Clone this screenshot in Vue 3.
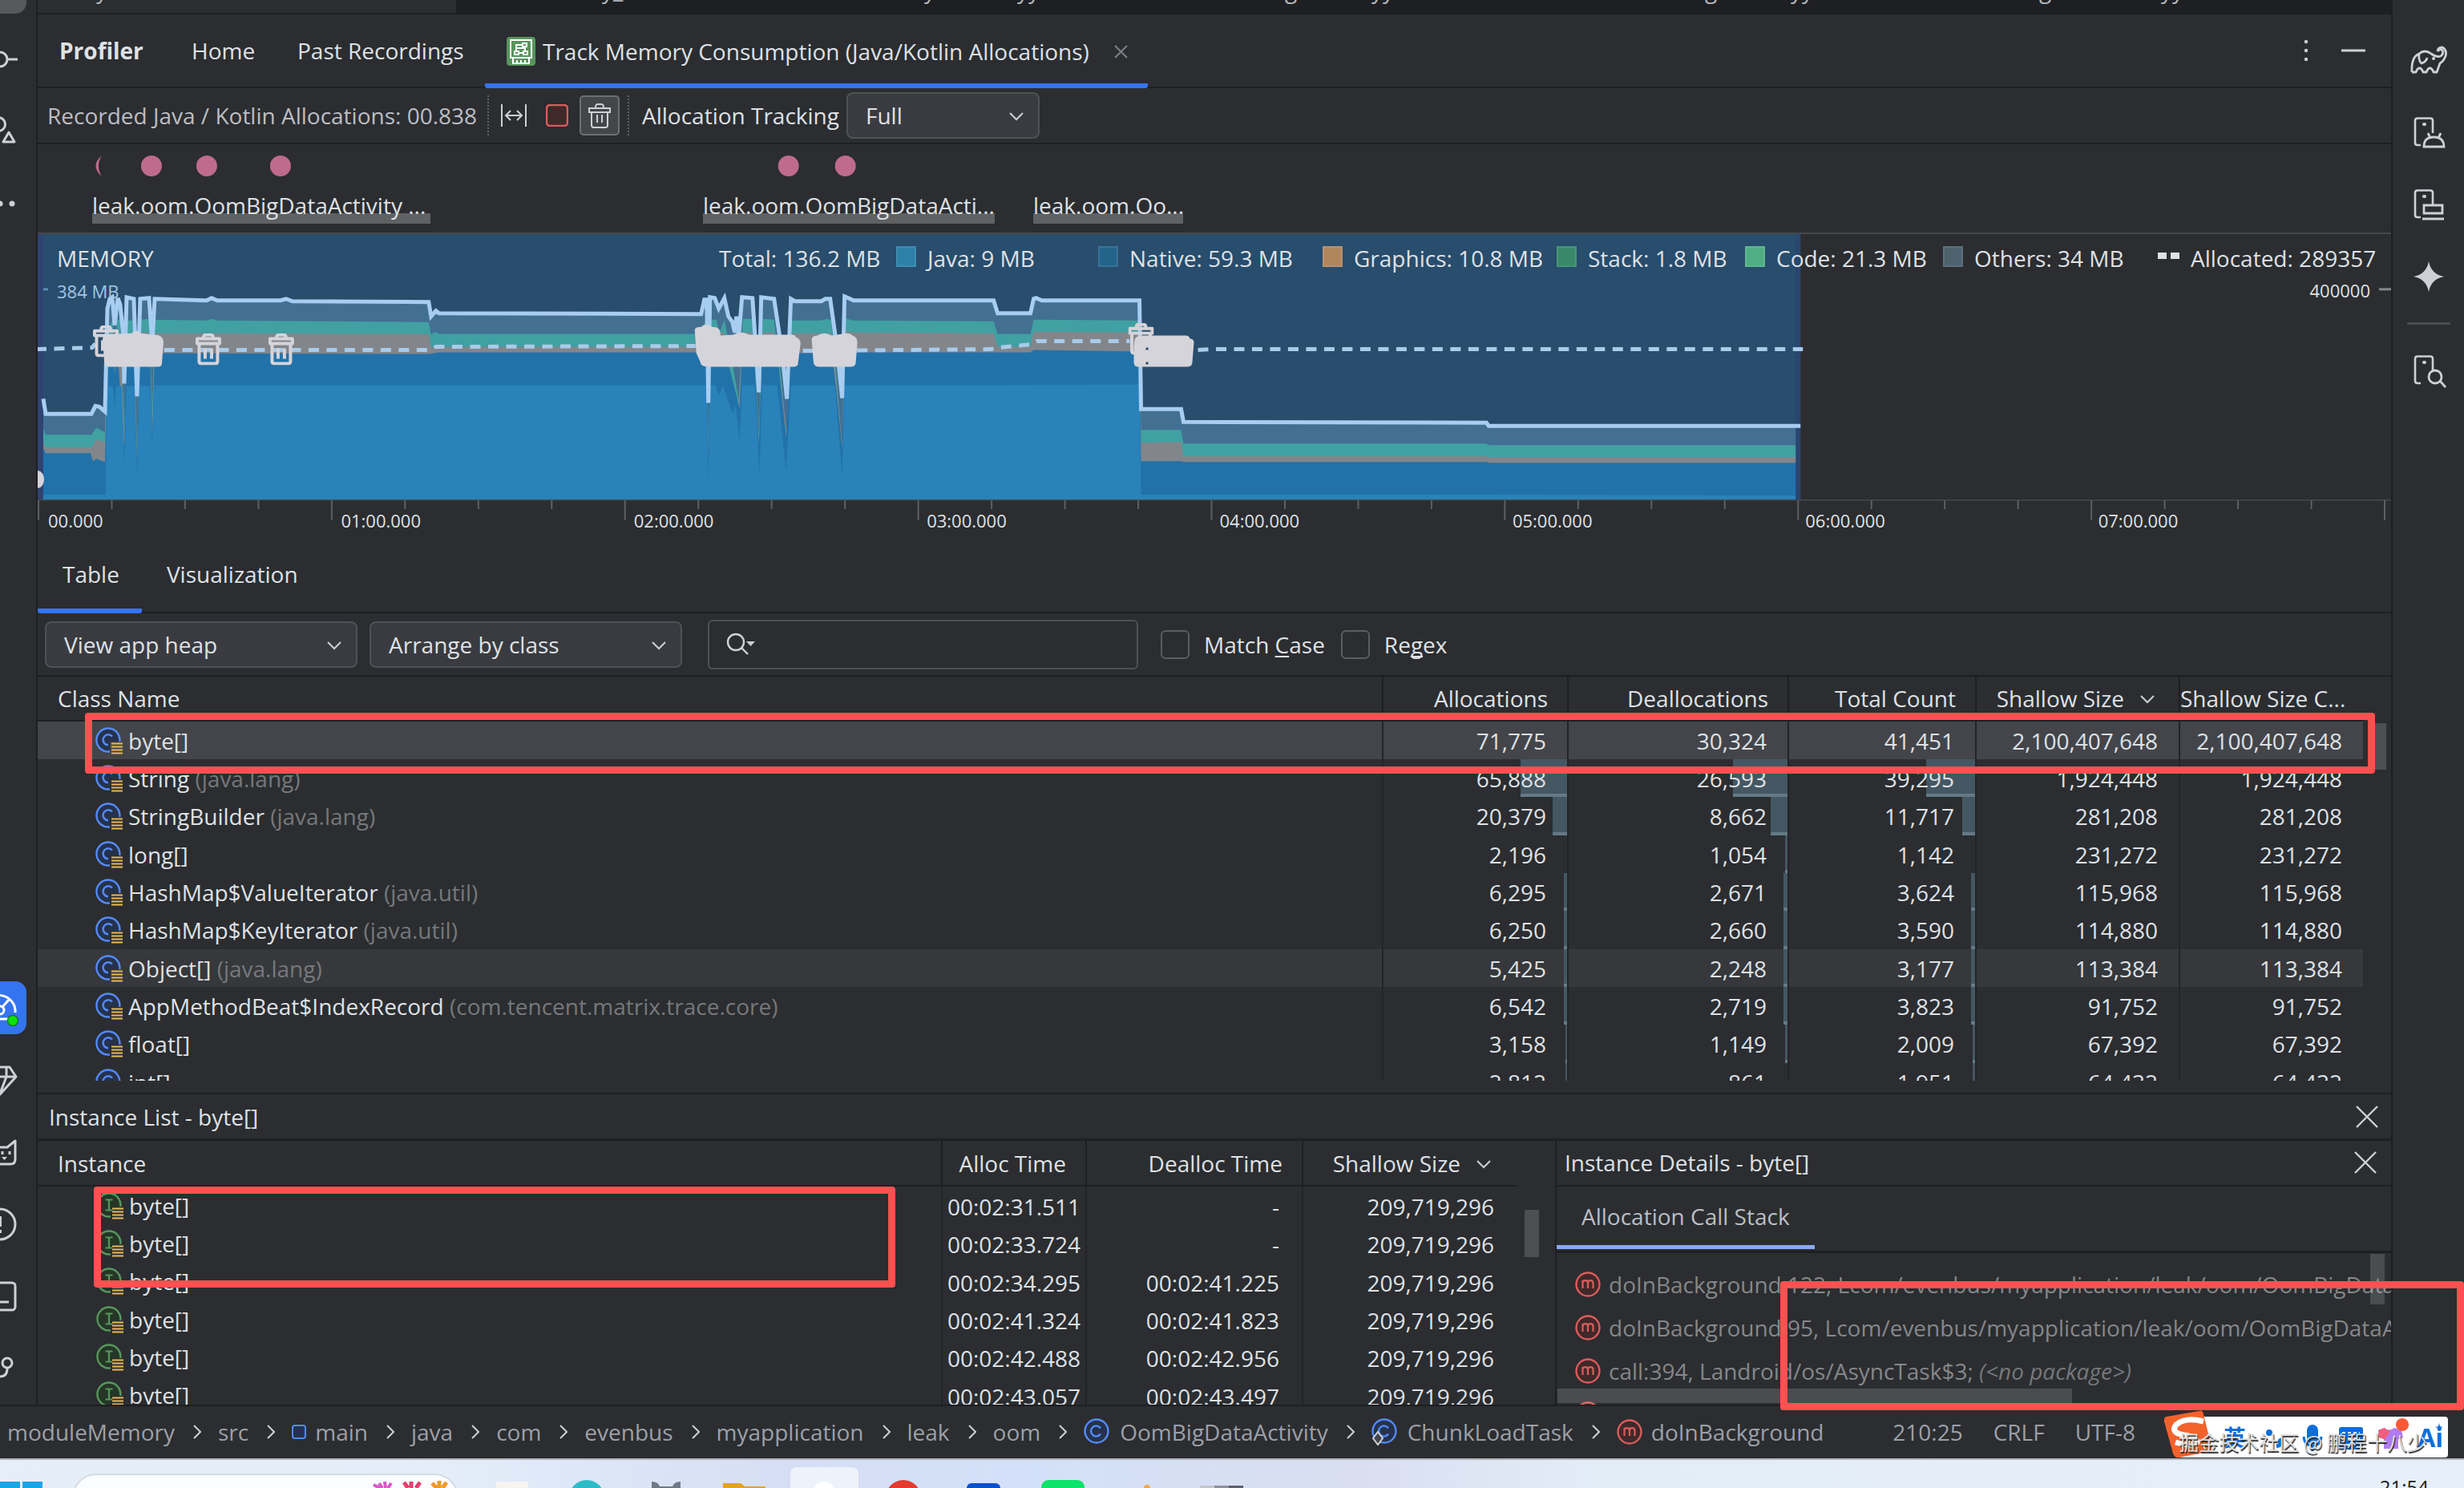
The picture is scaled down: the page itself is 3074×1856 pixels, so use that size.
<script setup>
import { ref } from 'vue'

const heap = ref('View app heap')
const arrange = ref('Arrange by class')
const tracking = ref('Full')
const query = ref('')
const matchCase = ref(false)
const regex = ref(false)
const taskSearch = ref('')

const stripMarks = [
  { t: 'y', w: 631 }, { t: 'y_', w: 402 }, { t: 'y', w: 116 }, { t: 'yy', w: 334 }, { t: 'g', w: 108 },
  { t: 'yy', w: 416 }, { t: 'g', w: 107 }, { t: 'yy', w: 310 }, { t: 'g', w: 152 }, { t: 'yy', w: 60 },
]

const touches = [189, 258, 350, 984, 1055]

const legend = [
  { name: 'Java: 9 MB', color: '#2d81a8' },
  { name: 'Native: 59.3 MB', color: '#24648a' },
  { name: 'Graphics: 10.8 MB', color: '#b0865f' },
  { name: 'Stack: 1.8 MB', color: '#37896a' },
  { name: 'Code: 21.3 MB', color: '#50ae84' },
  { name: 'Others: 34 MB', color: '#4e626d' },
]

const totalLine = '54,498 57,517 114,517 119,507 124,508 131,514 134,385 137,373 140,371 143,406 147,372 150,380 154,420 155,479 158,371 167,373 171,495 175,373 186,372 190,430 193,373 258,375 264,372 271,375 350,375 357,373 365,376 535,377 538,395 544,388 548,391 875,392 879,374 882,374 884,503 886,371 892,372 897,385 904,372 909,395 914,402 917,415 919,395 922,420 926,371 939,372 947,490 950,371 966,373 976,440 982,498 987,373 992,376 1025,376 1030,373 1036,373 1044,430 1051,497 1054,370 1061,373 1065,375 1240,375 1245,391 1286,391 1290,373 1293,372 1300,375 1422,375 1424,511 1474,511 1477,527 1855,528 1858,532 2247,532'
const close = ' 2243,624 54,624'
const others = totalLine.replace('2247,532', '2243,532') + close
const code = '54,535 57,543 114,543 120,534 131,540 134,412 141,398 143,480 146,399 150,399 155,530 158,400 167,400 171,560 175,399 186,398 190,510 193,399 258,400 264,398 271,400 535,402 538,418 543,414 548,417 875,417 880,400 884,540 888,399 894,399 898,415 904,399 910,430 922,500 927,398 939,398 947,540 952,398 966,399 976,480 982,560 987,400 1025,400 1032,398 1038,400 1044,470 1051,560 1054,397 1065,400 1240,401 1245,417 1286,417 1290,399 1422,400 1424,537 1474,537 1477,554 1855,554 1858,556 2243,556' + close
const graphics = '54,552 57,559 114,559 120,549 131,552 134,424 141,414 143,490 146,416 150,416 155,550 158,417 167,417 171,575 175,415 186,415 190,540 193,416 535,417 538,434 548,433 875,433 880,416 884,560 888,415 904,415 912,470 922,505 927,415 939,415 947,550 952,415 966,415 976,490 982,540 987,416 1038,416 1044,480 1051,555 1054,413 1065,415 1240,416 1245,433 1286,433 1290,414 1422,415 1424,553 1474,552 1477,570 1855,570 1858,571 2243,571' + close
const native = '54,560 57,566 113,566 116,576 120,573 131,577 134,448 141,442 143,468 147,442 155,560 157,442 167,442 171,578 174,442 187,442 190,545 193,441 535,442 548,440 875,440 882,441 884,570 886,441 905,441 914,474 923,510 926,441 941,441 947,556 951,441 970,441 981,545 987,441 1038,441 1044,490 1051,560 1054,440 1240,440 1286,440 1290,437 1422,439 1424,576 1474,576 1477,577 1855,577 1858,578 2243,578' + close
const java = '54,618 132,618 133,482 141,482 143,508 145,482 152,482 155,578 158,482 168,482 171,594 174,482 187,482 190,557 192,481 875,481 882,481 884,602 886,481 893,481 897,494 902,481 914,516 918,506 923,550 926,481 942,481 948,594 951,481 970,481 981,588 987,481 1042,481 1051,594 1054,481 1240,481 1422,480 1424,618 1855,618 2243,619' + close

const ticks = Array.from({ length: 33 }, (_, i) => 48 + i * 91.5)
const times = ['00.000', '01:00.000', '02:00.000', '03:00.000', '04:00.000', '05:00.000', '06:00.000', '07:00.000']

const classes = [
  { n: 'byte[]', p: '', v: ['71,775', '30,324', '41,451', '2,100,407,648', '2,100,407,648'], b: [0, 0, 0] },
  { n: 'String', p: '(java.lang)', v: ['65,888', '26,593', '39,295', '1,924,448', '1,924,448'], b: [58, 68, 61] },
  { n: 'StringBuilder', p: '(java.lang)', v: ['20,379', '8,662', '11,717', '281,208', '281,208'], b: [18, 21, 16] },
  { n: 'long[]', p: '', v: ['2,196', '1,054', '1,142', '231,272', '231,272'], b: [0, 3, 0] },
  { n: 'HashMap$ValueIterator', p: '(java.util)', v: ['6,295', '2,671', '3,624', '115,968', '115,968'], b: [4, 5, 5] },
  { n: 'HashMap$KeyIterator', p: '(java.util)', v: ['6,250', '2,660', '3,590', '114,880', '114,880'], b: [4, 5, 5] },
  { n: 'Object[]', p: '(java.lang)', v: ['5,425', '2,248', '3,177', '113,384', '113,384'], b: [4, 5, 5] },
  { n: 'AppMethodBeat$IndexRecord', p: '(com.tencent.matrix.trace.core)', v: ['6,542', '2,719', '3,823', '91,752', '91,752'], b: [4, 5, 5] },
  { n: 'float[]', p: '', v: ['3,158', '1,149', '2,009', '67,392', '67,392'], b: [2, 3, 3] },
  { n: 'int[]', p: '', v: ['2,812', '861', '1,951', '64,432', '64,432'], b: [2, 0, 3] },
]

const instances = [
  ['00:02:31.511', '-'], ['00:02:33.724', '-'], ['00:02:34.295', '00:02:41.225'],
  ['00:02:41.324', '00:02:41.823'], ['00:02:42.488', '00:02:42.956'], ['00:02:43.057', '00:02:43.497'],
]

const frames = [
  { t: 'doInBackground:122, Lcom/evenbus/myapplication/leak/oom/OomBigDataActivity', e: '' },
  { t: 'doInBackground:95, Lcom/evenbus/myapplication/leak/oom/OomBigDataActivity', e: '' },
  { t: 'call:394, Landroid/os/AsyncTask$3;', e: '(<no package>)' },
  { t: '', e: '' },
]

const crumbs = [
  { t: 'moduleMemory' }, { t: 'src' }, { t: 'main', i: 'dir' }, { t: 'java' }, { t: 'com' }, { t: 'evenbus' },
  { t: 'myapplication' }, { t: 'leak' }, { t: 'oom' }, { t: 'OomBigDataActivity', i: 'class' },
  { t: 'ChunkLoadTask', i: 'inner' }, { t: 'doInBackground', i: 'method' },
]
</script>

<template>
  <div class="app">
    <svg width="0" height="0" class="defs" aria-hidden="true">
      <symbol id="i-class" viewBox="0 0 34 34">
        <circle cx="16" cy="16" r="14.5" fill="#25324d" stroke="#548af7" stroke-width="2.4" />
        <path d="M21 12.5A6.5 6.500 0 1 0 21 19.500" fill="none" stroke="#548af7" stroke-width="2.4" />
      </symbol>
      <symbol id="i-class-src" viewBox="0 0 34 34">
        <path d="M30.300 18A14.500 14.500 0 1 0 18 30.400V18Z" fill="#25324d" />
        <path d="M30.300 18A14.500 14.500 0 1 0 18 30.400" fill="none" stroke="#548af7" stroke-width="2.4" />
        <path d="M21 11.500A6.500 6.500 0 1 0 16 22.300" fill="none" stroke="#548af7" stroke-width="2.4" />
        <path d="M20 20.500h14M20 24.500h14M20 28.500h14M20 32.500h14" stroke="#e5b95c" stroke-width="2" />
      </symbol>
      <symbol id="i-inst-src" viewBox="0 0 34 34">
        <path d="M30.300 18A14.500 14.500 0 1 0 18 30.400V18Z" fill="#253627" />
        <path d="M30.300 18A14.500 14.500 0 1 0 18 30.400" fill="none" stroke="#57965c" stroke-width="2.4" />
        <path d="M11.500 9.500h9M16 9.500v13M11.500 22.500h9" fill="none" stroke="#57965c" stroke-width="2.2" />
        <path d="M20 20.500h14M20 24.500h14M20 28.500h14M20 32.500h14" stroke="#e5b95c" stroke-width="2" />
      </symbol>
      <symbol id="i-method" viewBox="0 0 32 32">
        <circle cx="16" cy="16" r="14.500" fill="#402929" stroke="#db5c5c" stroke-width="2.4" />
        <path d="M9.500 21V11M9.500 14.500q0-3.300 3.200-3.300t3.300 3.300V21M16 14.500q0-3.300 3.200-3.300t3.300 3.300V21" fill="none" stroke="#db5c5c" stroke-width="2.200" />
      </symbol>
      <symbol id="i-chev" viewBox="0 0 18 12"><path d="M1 2l8 8 8-8" fill="none" stroke="#ced0d6" stroke-width="2" /></symbol>
      <symbol id="i-close" viewBox="0 0 28 28"><path d="M1 1l26 26M27 1L1 27" fill="none" stroke="#ced0d6" stroke-width="2.400" /></symbol>
      <symbol id="i-trash" viewBox="0 0 32 40">
        <path d="M10 6q0-4 3-4h6q3 0 3 4M2 7h28v6H2zM4.500 13v22q0 3 3 3h17q3 0 3-3V13M12 19v13M20 19v13" fill="none" stroke="#d5d4da" stroke-width="4" stroke-linejoin="round" />
      </symbol>
      <symbol id="i-phone" viewBox="-20 -20 40 40">
        <path d="M5 1V-14.500q0-3-3-3H-14q-3 0-3 3V13q0 3 3 3h4" fill="none" stroke="#ced0d6" stroke-width="2.600" />
        <rect x="-8" y="-12" width="5" height="4" rx="2" fill="#ced0d6" />
      </symbol>
    </svg>

    <div class="ide">
      <nav class="rail left">
        <div class="group top">
          <button class="tool grey" aria-label="Project"></button>
          <button class="tool" aria-label="Commit">
            <svg viewBox="-23 -23 46 46"><circle r="9" fill="none" stroke="#ced0d6" stroke-width="3" /><path d="M9 0H22" stroke="#ced0d6" stroke-width="3" /></svg>
          </button>
          <button class="tool" aria-label="Resources">
            <svg viewBox="-23 -23 46 46"><circle cx="-2" cy="-9" r="8.500" fill="none" stroke="#ced0d6" stroke-width="3" /><path d="M11 1l7 12H4z" fill="none" stroke="#ced0d6" stroke-width="3" stroke-linejoin="round" /></svg>
          </button>
          <button class="tool" aria-label="More">
            <svg viewBox="-23 -23 46 46"><circle cx="0" r="3.500" fill="#ced0d6" /><circle cx="15" r="3.500" fill="#ced0d6" /></svg>
          </button>
        </div>
        <div class="group">
          <button class="tool active" aria-label="Profiler">
            <svg viewBox="-23 -23 46 46"><path d="M-18 15A20 20 0 1 1 19 6M-4 14H10" fill="none" stroke="#fff" stroke-width="3" /><circle cx="0" cy="3" r="5" fill="none" stroke="#fff" stroke-width="3" /><path d="M3-1l8-9" stroke="#fff" stroke-width="3" /><circle cx="16" cy="16" r="6.500" fill="#0be40b" stroke="#1a7a2c" stroke-width="1.500" /></svg>
          </button>
          <button class="tool" aria-label="App quality">
            <svg viewBox="-23 -23 46 46"><path d="M-12-16H12L20-4 0 18-20-4ZM-8-4H20M8-16L8-4 0 17" fill="none" stroke="#ced0d6" stroke-width="3" stroke-linejoin="round" /></svg>
          </button>
          <button class="tool" aria-label="Logcat">
            <svg viewBox="-23 -23 46 46"><path d="M-19-14l8 8H9L19-14V9q0 6-6 6h-26q-6 0-6-6z" fill="none" stroke="#ced0d6" stroke-width="3" stroke-linejoin="round" /><path d="M3-1v4M12-1v4" stroke="#ced0d6" stroke-width="3" /><path d="M2 6h7L5.500 10z" fill="#ced0d6" /></svg>
          </button>
          <button class="tool" aria-label="Problems">
            <svg viewBox="-23 -23 46 46"><circle r="19" fill="none" stroke="#ced0d6" stroke-width="3" /><path d="M0-10V3M0 7v4" stroke="#ced0d6" stroke-width="4" /></svg>
          </button>
          <button class="tool" aria-label="Terminal">
            <svg viewBox="-23 -23 46 46"><rect x="-19" y="-17" width="38" height="34" rx="4" fill="none" stroke="#ced0d6" stroke-width="3" /><path d="M0 7h11" stroke="#ced0d6" stroke-width="3" /></svg>
          </button>
          <button class="tool" aria-label="Version control">
            <svg viewBox="-23 -23 46 46"><circle cx="9" cy="-7" r="6" fill="none" stroke="#ced0d6" stroke-width="3" /><path d="M9 0q0 10-9 10" fill="none" stroke="#ced0d6" stroke-width="3" /></svg>
          </button>
        </div>
      </nav>

      <main class="main">
        <div class="strip">
          <span v-for="(s, i) in stripMarks" :key="i" :style="{ width: s.w + 'px' }">{{ s.t }}</span>
        </div>

        <header class="head">
          <b class="title">Profiler</b>
          <a href="#" class="home">Home</a>
          <a href="#" class="past">Past Recordings</a>
          <div class="tab-open">
            <svg width="36" height="36" viewBox="0 0 36 36">
              <rect width="36" height="36" rx="4" fill="#57965c" />
              <path d="M5 4h26v22H5zM8 26v7h20v-7M13 33v-4M18 33v-4M23 33v-4" fill="none" stroke="#fff" stroke-width="2" />
              <path d="M20 8h5v4h-5zM10 18h5v4h-5zM21 18h5v4h-5zM15 20h6M12 18v-8h8M12 14h11v4" fill="none" stroke="#fff" stroke-width="2" />
            </svg>
            <span>Track Memory Consumption (Java/Kotlin Allocations)</span>
            <button class="plain" aria-label="Close tab"><svg width="17" height="17" viewBox="0 0 17 17"><path d="M1 1l15 15M16 1L1 16" stroke="#7d8086" stroke-width="2" /></svg></button>
          </div>
          <div class="head-actions">
            <button class="plain" aria-label="Options"><svg width="6" height="30" viewBox="0 0 6 30"><circle cx="3" cy="4" r="2.200" fill="#ced0d6" /><circle cx="3" cy="15" r="2.200" fill="#ced0d6" /><circle cx="3" cy="26" r="2.200" fill="#ced0d6" /></svg></button>
            <button class="plain" aria-label="Minimize"><svg width="30" height="30" viewBox="0 0 30 30"><path d="M0 15h30" stroke="#ced0d6" stroke-width="3" /></svg></button>
          </div>
        </header>

        <div class="toolbar">
          <span class="recorded">Recorded Java / Kotlin Allocations: 00.838</span>
          <i class="dots"></i>
          <button class="plain fit" aria-label="Zoom to fit"><svg width="32" height="28" viewBox="0 0 32 28"><path d="M1 0v28M31 0v28M6 14h20M12 8l-6 6 6 6M20 8l6 6-6 6" fill="none" stroke="#ced0d6" stroke-width="2" /></svg></button>
          <button class="plain stop" aria-label="Stop"><svg width="28" height="28" viewBox="0 0 28 28"><rect x="1" y="1" width="26" height="26" rx="4" fill="#402929" stroke="#db5c5c" stroke-width="2.400" /></svg></button>
          <button class="gc" aria-label="Force garbage collection"><svg width="28" height="32" viewBox="0 0 28 32"><path d="M9 6q0-4 3-4h4q3 0 3 4M1 7h26v5H1zM4 12v16q0 3 3 3h14q3 0 3-3V12M11 15v10M17 15v10" fill="none" stroke="#ced0d6" stroke-width="2" /></svg></button>
          <i class="dots"></i>
          <label for="tracking" class="track-label">Allocation Tracking</label>
          <span class="select small">
            <select id="tracking" v-model="tracking"><option>Full</option></select>
            <svg width="18" height="12"><use href="#i-chev" /></svg>
          </span>
        </div>

        <div class="events">
          <svg class="touches" height="110" viewBox="47 180 2937 110" preserveAspectRatio="none">
            <path d="M127 194q-15 13 0 26-8-13 0-26z" fill="#bf6b8e" />
            <circle v-for="x in touches" :key="x" :cx="x" cy="207" r="13" fill="#bf6b8e" />
          </svg>
          <div class="activities">
            <span class="a1">leak.oom.OomBigDataActivity ...</span>
            <span class="a2">leak.oom.OomBigDataActi...</span>
            <span class="a3">leak.oom.Oo...</span>
          </div>
        </div>

        <section class="chart">
          <svg class="plot" height="332" viewBox="47 292 2937 332" preserveAspectRatio="none">
            <rect x="47" y="292" width="2200" height="332" fill="#284d6d" />
            <polygon :points="others" fill="#436f93" />
            <polygon :points="code" fill="#40a0a2" />
            <polygon :points="graphics" fill="#82868b" />
            <polygon :points="native" fill="#2272aa" />
            <polygon :points="java" fill="#2982ba" />
            <rect x="47" y="292" width="7" height="332" fill="#2f4372" />
            <rect x="2241" y="292" width="6" height="332" fill="#294571" />
            <path d="M54 361h6" stroke="#5d8db3" stroke-width="3" />
            <path d="M2969 361h15" stroke="#85878a" stroke-width="3" />
            <polyline :points="totalLine" fill="none" stroke="#a7cdf1" stroke-width="5" />
            <g fill="none" stroke="#a9cbea" stroke-width="5" stroke-dasharray="13 9.500">
              <path d="M45 436L115 434 119 429" />
              <path d="M205 437H535L544 433 868 432" />
              <path d="M1002 438L1236 436 1245 434 1286 430 1294 426H1410" />
              <path d="M1495 437L1510 436H2250" />
            </g>
            <g fill="#d5d4da">
              <path d="M128 424q0-6 8-6l8-1 20-1q6-6 12 0l16 2q12 0 12 10l-2 26q0 4-5 4h-62q-4 0-5-8z" />
              <path d="M867 412q0-4 8-4 6-6 14 0 10 0 10 8v3l16-1q10-6 20 0h50q8-1 8 3 6 2 6 8l-3 24q0 5-6 5h-106q-10 0-10-6l-5-11z" />
              <path d="M1013 424q0-5 7-5 8-6 18 0l18-3q6 0 8 3 6 2 6 9l-2 24q0 6-6 6h-40q-7 0-7-8z" />
              <path d="M1416 424q2-5 10-5l54 0q4 0 5 4 5 0 5 5l-2 24q0 6-6 6h-62q-5 0-5-6v-20z" />
              <path d="M47 588a8 11 0 0 1 0 22z" />
            </g>
            <path d="M1430 434h3v3h-3zM1430 452h3v3h-3z" fill="#2b4b69" />
            <use href="#i-trash" x="116" y="406" width="32" height="40" />
            <use href="#i-trash" x="244" y="416" width="32" height="40" />
            <use href="#i-trash" x="335" y="416" width="32" height="40" />
            <use href="#i-trash" x="1408" y="403" width="32" height="40" />
          </svg>
          <span class="mem">MEMORY</span>
          <span class="ymax">384 MB</span>
          <span class="ymax2">400000</span>
          <div class="legend">
            <span class="total">Total: 136.2 MB</span>
            <span v-for="l in legend" :key="l.name"><i class="sw" :style="{ background: l.color }"></i>{{ l.name }}</span>
            <span><i class="dash"></i>Allocated: 289357</span>
          </div>
        </section>

        <div class="axis">
          <svg class="ticks" height="60" viewBox="47 0 2937 60" preserveAspectRatio="none">
            <path d="M47 0H2984" stroke="#45494c" stroke-width="3" />
            <path v-for="(x, i) in ticks" :key="i" :d="`M${x} 1v${i % 4 ? 11 : 25}`" stroke="#5d6063" stroke-width="2" />
          </svg>
          <div class="times"><span v-for="t in times" :key="t">{{ t }}</span></div>
        </div>

        <nav class="tabs">
          <button class="on">Table</button>
          <button>Visualization</button>
        </nav>

        <div class="filters">
          <span class="select">
            <select v-model="heap" aria-label="Heap"><option>View app heap</option></select>
            <svg width="18" height="12"><use href="#i-chev" /></svg>
          </span>
          <span class="select">
            <select v-model="arrange" aria-label="Arrangement"><option>Arrange by class</option></select>
            <svg width="18" height="12"><use href="#i-chev" /></svg>
          </span>
          <span class="search">
            <svg width="38" height="30" viewBox="0 0 38 30"><circle cx="12" cy="12" r="10" fill="none" stroke="#ced0d6" stroke-width="2.400" /><path d="M19 19l8 8" stroke="#ced0d6" stroke-width="2.400" /><path d="M25 11h11l-5.500 6z" fill="#ced0d6" /></svg>
            <input v-model="query" type="text" aria-label="Filter" />
          </span>
          <label class="check"><input v-model="matchCase" type="checkbox" /><span>Match <u>C</u>ase</span></label>
          <label class="check"><input v-model="regex" type="checkbox" /><span>Re<u>g</u>ex</span></label>
        </div>

        <section class="classes">
          <div class="clip">
            <table>
              <colgroup><col /><col class="c1" /><col class="c2" /><col class="c3" /><col class="c4" /><col class="c5" /></colgroup>
              <thead>
                <tr>
                  <th class="first">Class Name</th><th>Allocations</th><th>Deallocations</th><th>Total Count</th>
                  <th class="sorted">Shallow Size<svg width="18" height="12"><use href="#i-chev" /></svg></th>
                  <th class="last">Shallow Size C...</th>
                </tr>
              </thead>
              <tbody>
                <tr v-for="(c, r) in classes" :key="c.n" :class="{ sel: r === 0, hov: r === 6 }">
                  <td class="first"><span class="cell"><svg width="34" height="34"><use href="#i-class-src" /></svg><span>{{ c.n }} <em v-if="c.p">{{ c.p }}</em></span></span></td>
                  <td v-for="(v, i) in c.v" :key="i"><i v-if="c.b[i]" class="bar" :style="{ width: c.b[i] + 'px' }"></i><span class="num">{{ v }}</span></td>
                </tr>
              </tbody>
            </table>
          </div>
          <i class="scroll"></i>
        </section>

        <section class="bottom">
          <div class="bar-title"><span>Instance List - byte[]</span><button class="plain" aria-label="Close instance list"><svg width="28" height="28"><use href="#i-close" /></svg></button></div>
          <div class="split">
            <div class="list">
              <table>
                <colgroup><col /><col class="d1" /><col class="d2" /><col class="d3" /></colgroup>
                <thead>
                  <tr><th class="first">Instance</th><th>Alloc Time</th><th>Dealloc Time</th><th class="sorted">Shallow Size<svg width="18" height="12"><use href="#i-chev" /></svg></th></tr>
                </thead>
                <tbody>
                  <tr v-for="i in instances" :key="i[0]">
                    <td class="first"><span class="cell"><svg width="34" height="34"><use href="#i-inst-src" /></svg><span>byte[]</span></span></td>
                    <td class="at">{{ i[0] }}</td><td>{{ i[1] }}</td><td>209,719,296</td>
                  </tr>
                </tbody>
              </table>
              <i class="scroll"></i>
            </div>
            <div class="details">
              <div class="det-title"><span>Instance Details - byte[]</span><button class="plain" aria-label="Close instance details"><svg width="28" height="28"><use href="#i-close" /></svg></button></div>
              <div class="det-tabs"><button>Allocation Call Stack</button></div>
              <div class="stack">
                <div v-for="(f, i) in frames" :key="i" class="frame"><svg width="32" height="32"><use href="#i-method" /></svg><span>{{ f.t }} <em v-if="f.e">{{ f.e }}</em></span></div>
                <i class="vs"></i><i class="hs"></i>
              </div>
            </div>
          </div>
        </section>
      </main>

      <nav class="rail right">
        <button class="tool" aria-label="Gradle">
          <svg viewBox="0 -6 46 46"><path d="M2 32Q1 13 11 9 18 3 26 9 33 14 38 12 42 9 40 5 37 2 34 6M34 6Q34 1 40 1 46 4 44 12 41 19 37 21L33 32H29Q27 27 24.500 27T20 32H16Q14 27 11.500 27T7 32H2M11 9Q10 18 14 21 20 19 21 14" fill="none" stroke="#ced0d6" stroke-width="2.800" stroke-linejoin="round" /><circle cx="29" cy="15" r="2" fill="#ced0d6" /></svg>
        </button>
        <button class="tool" aria-label="Device manager">
          <svg viewBox="-23 -23 46 46"><use href="#i-phone" x="-20" y="-20" width="40" height="40" /><path d="M-6 18Q-6 6 6.500 6T19 18ZM-1 1l3 6M15 1l-3 6" fill="none" stroke="#ced0d6" stroke-width="2.800" /></svg>
        </button>
        <button class="tool" aria-label="Running devices">
          <svg viewBox="-23 -23 46 46"><use href="#i-phone" x="-20" y="-20" width="40" height="40" /><path d="M-6 1H17V11H-6ZM-8 18H19" fill="none" stroke="#ced0d6" stroke-width="2.800" /></svg>
        </button>
        <button class="tool" aria-label="Assistant">
          <svg viewBox="-23 -23 46 46"><path d="M0-19Q3-3 19 0 3 3 0 19-3 3-19 0-3-3 0-19Z" fill="#ced0d6" /></svg>
        </button>
        <hr />
        <button class="tool" aria-label="Device explorer">
          <svg viewBox="-23 -23 46 46"><use href="#i-phone" x="-20" y="-20" width="40" height="40" /><circle cx="8" cy="8" r="8" fill="none" stroke="#ced0d6" stroke-width="2.800" /><path d="M14 13l7 8" stroke="#ced0d6" stroke-width="2.800" /></svg>
        </button>
      </nav>

      <i class="mark m1"></i><i class="mark m2"></i><i class="mark m3"></i>
    </div>

    <footer class="status">
      <div class="crumbs">
        <template v-for="(c, i) in crumbs" :key="c.t">
          <svg v-if="i" class="sep" width="10" height="18" viewBox="0 0 10 18"><path d="M1 1l8 8-8 8" fill="none" stroke="#ced0d6" stroke-width="2" /></svg>
          <a href="#">
            <svg v-if="c.i === 'dir'" width="18" height="18" viewBox="0 0 18 18"><rect x="1" y="1" width="16" height="16" rx="3" fill="#25324d" stroke="#548af7" stroke-width="2" /></svg>
            <svg v-if="c.i === 'class'" class="big" width="34" height="34"><use href="#i-class" /></svg>
            <svg v-if="c.i === 'inner'" class="big" width="34" height="34"><use href="#i-class" /><path d="M8 17l6 8-6 8-6-8z" fill="#43454a" stroke="#ced0d6" stroke-width="2" /></svg>
            <svg v-if="c.i === 'method'" class="big" width="32" height="32"><use href="#i-method" /></svg>{{ c.t }}</a>
        </template>
      </div>
      <div class="info"><span>210:25</span><span>CRLF</span><span>UTF-8</span></div>
      <div class="ime">
        <svg class="ime-s" width="60" height="60" viewBox="0 0 60 60"><path d="M4 8Q0 9 1 14L12 54Q14 60 20 59L58 51Q62 50 60 45L50 5Q49-1 44 1Z" fill="#f4622b" /><path d="M50 14Q28 8 16 18 8 28 26 31 42 33 42 40 36 46 15 40" fill="none" stroke="#fff" stroke-width="7" /></svg>
        <span class="ying">英</span>
        <svg width="250" height="51" viewBox="2804 1767 250 51">
          <circle cx="2831" cy="1787" r="4" fill="#0b6edb" /><path d="M2843 1795q6 7-3 9" stroke="#0b6edb" stroke-width="5" fill="none" />
          <rect x="2878" y="1777" width="14" height="24" rx="7" fill="#0b6edb" /><path d="M2874 1792q1 11 11 11t11-11M2885 1804v6" stroke="#0b6edb" stroke-width="3" fill="none" />
          <rect x="2918" y="1780" width="30" height="28" rx="3" fill="#0b6edb" /><path d="M2922 1787h22M2922 1794h22M2927 1802h13" stroke="#fff" stroke-width="2" stroke-dasharray="4 3" />
          <path d="M2967 1784l8-3q5 5 12 0l9 3 2 9-6 2v12h-18v-12l-6-2z" fill="#b07cf2" /><path d="M2967 1784l8-3q3 4 8 3l-9 13v-2l-6-2z" fill="#ef5f7c" /><circle cx="2997" cy="1777" r="8" fill="#fa5a36" />
          <path d="M3043 1775l1 4 4 1-4 1-1 4-1-4-4-1 4-1z" fill="#0b6edb" />
        </svg>
        <b class="ai">Ai</b>
      </div>
      <span class="watermark">掘金技术社区 @ 鹏程十八少</span>
    </footer>

    <footer class="taskbar">
      <svg width="53" height="35" viewBox="0 0 53 35"><path d="M0 27h25v8H0zM28 27h25v8H28z" fill="#1ba5e8" /></svg>
      <span class="pill">
        <input v-model="taskSearch" type="text" aria-label="Search" />
        <svg width="100" height="17" viewBox="465 1839 100 17"><path d="M467 1852l8 4M474 1850l4 6M481 1848l1 8M489 1850l-4 6" stroke="#d957c8" stroke-width="4" /><path d="M505 1849l5 7M514 1848v8M525 1849l-5 7" stroke="#e5406e" stroke-width="5" /><path d="M540 1850l6 6M549 1847v9M558 1849l-5 7" stroke="#f0982a" stroke-width="5" /></svg>
      </span>
      <svg width="960" height="35" viewBox="600 1821 960 35">
        <rect x="619" y="1848" width="40" height="8" fill="#f6f4f0" />
        <circle cx="732" cy="1868" r="22" fill="#2cbcc8" />
        <path d="M813 1848q8 0 10 6h16q2-6 10-6v8h-36z" fill="#6f7a86" />
        <path d="M902 1850h22l5 4h26v4h-53z" fill="#e3a31a" />
        <rect x="986" y="1830" width="85" height="40" rx="8" fill="#eef2fb" />
        <circle cx="1028" cy="1862" r="14" fill="#fff" />
        <circle cx="1127" cy="1868" r="22" fill="#e23b30" />
        <rect x="1206" y="1850" width="42" height="20" rx="6" fill="#0b4fd0" />
        <rect x="1299" y="1846" width="54" height="30" rx="9" fill="#0be36b" />
        <circle cx="1431" cy="1856" r="4" fill="#f5a54a" />
        <path d="M1497 1853h18v3h-18z" fill="#c2c6cc" /><path d="M1515 1853h18v3h-18z" fill="#8c9099" /><path d="M1533 1853h18v3h-18z" fill="#5c6068" />
      </svg>
      <span class="clock">21:54</span>
    </footer>
  </div>
</template>

<style>
body { background: #2b2d30; overflow: hidden; }
</style>

<style scoped>
* { box-sizing: border-box; }
.app { height: 100vh; display: flex; flex-direction: column; overflow: hidden; background: #2b2d30; color: #dfe1e5; font: 28px/40px "Open Sans", "Noto Sans", "Noto Sans CJK SC", sans-serif; }
.defs { position: absolute; }
svg { display: block; flex: none; }
button, input, select { font: inherit; color: inherit; background: none; border: 0; padding: 0; margin: 0; outline: 0; border-radius: 0; }
a { color: inherit; text-decoration: none; }
span, button, th, td { white-space: nowrap; }
.plain { display: flex; align-items: center; }

.ide { flex: 1; min-height: 0; display: flex; position: relative; border-bottom: 2px solid #1e1f22; }
.rail { flex: none; display: flex; flex-direction: column; }
.rail.left { width: 47px; justify-content: space-between; overflow: hidden; border-right: 2px solid #1e1f22; padding-bottom: 12px; }
.rail.left .group { display: flex; flex-direction: column; gap: 24px; width: 66px; margin-left: -33px; }
.rail.left .top { margin-top: -49px; }
.rail.right { width: 91px; align-items: center; gap: 24px; padding-top: 42px; border-left: 2px solid #1e1f22; }
.rail.right hr { width: 54px; height: 3px; margin: 0; border: 0; background: #4a4c50; }
.tool { width: 66px; height: 66px; border-radius: 14px; display: flex; align-items: center; justify-content: center; }
.tool svg { width: 46px; height: 46px; }
.tool.grey { background: #57595b; }
.tool.active { background: #3574f0; }

.main { flex: 1; min-width: 0; display: flex; flex-direction: column; }
.strip { flex: none; height: 18px; display: flex; overflow: hidden; padding-left: 73px; border-bottom: 2px solid #1e1f22; background: linear-gradient(90deg, #2b2d30 522px, #1e1f22 522px); color: #b4b7bc; line-height: 0; }
.strip span { flex: none; height: 0; margin-top: -13px; }

.head { flex: none; height: 92px; display: flex; align-items: center; padding-left: 27px; border-bottom: 2px solid #1e1f22; }
.title { width: 165px; }
.home { width: 132px; }
.past { width: 234px; }
.tab-open { height: 92px; width: 827px; margin-bottom: -2px; padding: 6px 25px 0 27px; display: flex; align-items: center; gap: 9px; border-bottom: 6px solid #3574f0; border-radius: 3px; }
.tab-open .plain { margin-left: auto; }
.head-actions { margin-left: auto; display: flex; gap: 41px; padding-right: 32px; }

.toolbar { flex: none; height: 70px; display: flex; align-items: center; padding-left: 12px; border-bottom: 2px solid #1e1f22; }
.recorded { width: 549px; color: #bcbec4; }
.dots { height: 50px; border-left: 2px dotted #606367; }
.fit { margin-left: 15px; }
.stop { margin-left: 24px; }
.gc { width: 50px; height: 50px; margin: 0 10px 0 14px; display: flex; align-items: center; justify-content: center; background: #43474a; border: 2px solid #6c7073; border-radius: 5px; }
.track-label { width: 271px; padding-left: 16px; white-space: nowrap; }
.select { position: relative; display: block; width: 390px; }
.select.small { width: 241px; }
.select select { appearance: none; width: 100%; height: 58px; padding: 0 22px; background: #393b40; border: 2px solid #4e5157; border-radius: 8px; }
.select svg { position: absolute; right: 20px; top: 24px; pointer-events: none; }

.events { flex: none; height: 110px; position: relative; }
.touches { width: 100%; position: absolute; left: 0; top: 0; }
.activities { display: flex; padding: 56px 0 0 68px; position: relative; }
.activities span { height: 43px; background: linear-gradient(#5f6163, #5f6163) 0 30px / 100% 13px no-repeat; overflow: hidden; }
.a1 { width: 422px; margin-right: 340px; }
.a2 { width: 364px; margin-right: 48px; }
.a3 { width: 187px; }

.chart { flex: none; height: 333px; position: relative; border-top: 2px solid #46484a; }
.plot { width: 100%; height: 331px; }
.mem { position: absolute; left: 24px; top: 10px; }
.ymax { position: absolute; left: 24px; top: 51px; font-size: 22px; color: #a4c6e4; }
.ymax2 { position: absolute; right: 26px; top: 50px; font-size: 22px; }
.legend { position: absolute; right: 0; top: 10px; display: grid; grid-template-columns: 221px 252px 280px 292px 235px 247px 268px 291px; }
.legend span { display: flex; align-items: center; gap: 14px; }
.sw { width: 25px; height: 26px; margin-top: -4px; border: 2px solid #ffffff18; flex: none; }
.dash { width: 27px; height: 8px; flex: none; margin-top: -6px; background: linear-gradient(90deg, #dfe1e5 11px, transparent 11px 16px, #dfe1e5 16px); }

.axis { flex: none; height: 61px; position: relative; font-size: 22px; }
.ticks { width: 100%; position: absolute; left: 0; top: 0; }
.times { display: flex; position: relative; padding: 6px 0 0 13px; }
.times span { width: 366px; flex: 0 1 366px; }

.tabs { flex: none; height: 81px; display: flex; border-bottom: 2px solid #1e1f22; }
.tabs button { height: 81px; padding: 0 28px 11px 31px; border-bottom: 6px solid transparent; border-radius: 3px; }
.tabs .on { border-color: #3574f0; }

.filters { flex: none; height: 79px; display: flex; align-items: center; padding-left: 9px; border-bottom: 2px solid #1e1f22; }
.filters .select { margin-right: 15px; }
.search { width: 537px; height: 62px; margin: 0 28px 0 17px; display: flex; align-items: center; gap: 10px; padding-left: 21px; border: 2px solid #4e5157; border-radius: 6px; }
.search input { flex: 1; min-width: 0; height: 56px; }
.check { display: flex; align-items: center; gap: 18px; margin-right: 20px; white-space: nowrap; }
.check input { appearance: none; width: 36px; height: 36px; border: 2px solid #5a5d63; border-radius: 6px; }
.check u { text-underline-offset: 3px; text-decoration-thickness: 2px; text-decoration-skip-ink: none; }

table { width: 100%; table-layout: fixed; border-collapse: separate; border-spacing: 0; }
th { font-weight: 400; text-align: right; height: 56px; padding: 0 24px 0 0; border-bottom: 2px solid #1e1f22; border-left: 2px solid #1e1f22; }
td { text-align: right; height: 47px; padding: 0 26px 0 0; line-height: 40px; border-left: 2px solid #222427; position: relative; }
tr:nth-child(3n) td { height: 48px; }
th.first { text-align: left; padding-left: 25px; border-left: 0; }
td.first { text-align: left; border-left: 0; }
th.sorted svg { display: inline-block; margin-left: 20px; vertical-align: 4px; }
.cell { display: flex; align-items: center; gap: 7px; }
em { font-style: normal; color: #76787b; }
.sel td { background: #43454a; }
.hov td { background: #36383b; }
.bar { position: absolute; right: 0; top: 0; bottom: 0; background: #445763; border-bottom: 4px solid #647a87; }
.num { position: relative; }
.scroll { position: absolute; background: #4d4f51; }

.classes { flex: 1; min-height: 0; position: relative; padding: 0 35px 15px 0; border-bottom: 2px solid #1e1f22; }
.clip { height: 100%; overflow: hidden; }
.classes td.first { padding-left: 72px; }
.classes th.last { padding-right: 0; text-align: left; }
.classes th.sorted { padding-right: 30px; }
.classes .scroll { right: 6px; top: 58px; width: 17px; height: 58px; }
.c1 { width: 231px; } .c2 { width: 275px; } .c3 { width: 234px; } .c4 { width: 254px; } .c5 { width: 230px; }

.bottom { flex: none; height: 387px; display: flex; flex-direction: column; }
.bar-title { flex: none; height: 58px; display: flex; align-items: center; justify-content: space-between; padding: 0 16px 0 14px; border-bottom: 3px solid #1e1f22; }
.split { flex: 1; min-height: 0; display: grid; grid-template-columns: minmax(0, 1893fr) minmax(0, 1043fr); grid-template-rows: minmax(0, 1fr); }
.list { overflow: hidden; position: relative; padding-right: 48px; }
.list th { height: 57px; }
.list td { padding: 3px 28px 0 0; line-height: 38px; }
.list td.first { padding: 0 0 0 73px; }
.list td.at { padding: 3px 0 0; text-align: center; }
.list .scroll { right: 20px; top: 86px; width: 18px; height: 59px; }
.list th.sorted { padding-right: 32px; }
.d1 { width: 180px; } .d2 { width: 270px; } .d3 { width: 268px; }
.details { display: flex; flex-direction: column; border-left: 2px solid #1e1f22; }
.det-title { flex: none; height: 57px; display: flex; align-items: center; justify-content: space-between; padding: 0 18px 2px 10px; border-bottom: 2px solid #1e1f22; }
.det-tabs { flex: none; height: 83px; border-bottom: 3px solid #1e1f22; }
.det-tabs button { height: 78px; padding: 0 31px; color: #bcbec4; border-bottom: 5px solid #86a9f2; }
.stack { flex: 1; min-height: 0; overflow: hidden; position: relative; padding: 12px 0 0 23px; color: #85878a; }
.frame { height: 54px; display: flex; align-items: center; gap: 10px; }
.frame em { font-style: italic; }
.vs { position: absolute; right: 8px; top: 1px; width: 18px; height: 63px; background: #ffffff26; }
.hs { position: absolute; left: 1px; bottom: 2px; width: 642px; height: 18px; background: #ffffff26; }

.mark { position: absolute; border: 9px solid #fc5150; border-radius: 4px; pointer-events: none; }
.m1 { left: 106px; right: 111px; top: 889px; height: 76px; }
.m2 { left: 117px; width: 1000px; bottom: 146px; height: 126px; }
.m3 { right: 0; width: 853px; bottom: -7px; height: 161px; z-index: 2; }

.status { flex: none; height: 67px; display: flex; align-items: center; justify-content: space-between; position: relative; padding: 0 410px 2px 9px; border-bottom: 2px solid #b4b6bd; color: #9da0a8; }
.crumbs { display: flex; align-items: center; }
.crumbs a { display: flex; align-items: center; gap: 11px; white-space: nowrap; }
.sep { margin: 0 21px 0 23px; }
.info { display: flex; gap: 38px; }
.ime { position: absolute; right: 20px; top: 13px; width: 340px; height: 51px; background: #fff; border-radius: 4px; color: #0b6edb; display: flex; align-items: center; }
.ime-s { position: absolute; left: -15px; top: -8px; }
.ying { position: absolute; left: 60px; font-weight: 700; font-size: 28px; }
.ime > svg:not(.ime-s) { position: absolute; right: 0; }
.ai { position: absolute; right: 6px; font-size: 32px; }
.watermark { position: absolute; right: 46px; top: 24px; font-size: 25px; color: #dcdcdc; text-shadow: 1px 2px 1px #222; font-family: "Noto Sans CJK SC", sans-serif; }

.taskbar { flex: none; height: 35px; overflow: hidden; display: flex; align-items: flex-start; background: linear-gradient(90deg, #e6eff8 0, #e4edf9 18%, #d5def4 32%, #d3e1f8 42%, #d9def0 55%, #e3edf8 65%, #e6effa 100%); color: #1c1d20; }
.pill { position: relative; width: 482px; height: 60px; margin: 17px 28px 0 37px; background: #fafcff; border: 2px solid #d5dbe5; border-radius: 30px; }
.pill input { width: 340px; height: 40px; margin-left: 24px; }
.pill svg { position: absolute; right: 6px; top: -1px; }
.clock { margin: 14px 44px 0 auto; font-size: 24px; }
</style>
